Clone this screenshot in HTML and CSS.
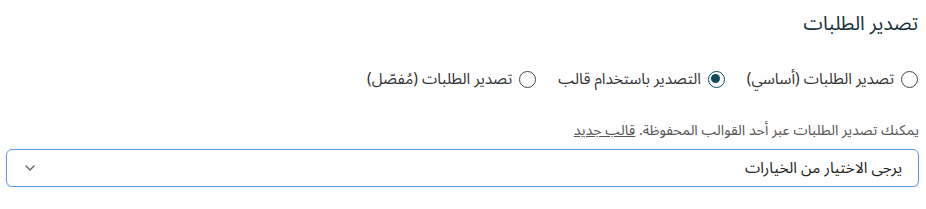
FILE: index.html
```html
<!DOCTYPE html>
<html lang="ar" dir="rtl">
<head>
    <meta charset="UTF-8">
    <meta name="viewport" content="width=device-width, initial-scale=1.0">
    <title>تصدير الطلبات</title>
    <link rel="stylesheet" href="styles.css">
</head>
<body>
<div class="export-form">
    <h5 class="form-title">تصدير الطلبات</h5>
    <div class="radio-group">
        <label class="radio-item">
            <span class="radio"></span>
            <span>تصدير الطلبات (أساسي)</span>
        </label>
        <label class="radio-item">
            <span class="radio checked"></span>
            <span>التصدير باستخدام قالب</span>
        </label>
        <label class="radio-item">
            <span class="radio"></span>
            <span>تصدير الطلبات (مُفصّل)</span>
        </label>
    </div>
    <p class="help-text">يمكنك تصدير الطلبات عبر أحد القوالب المحفوظة. <a href="#">قالب جديد</a></p>
    <div class="select-box">
        <span>يرجى الاختيار من الخيارات</span>
        <svg class="chevron" width="10" height="6" viewBox="0 0 10 6"><path d="M1 1l4 4 4-4" fill="none" stroke="#6b5a4a" stroke-width="1.3" stroke-linecap="round" stroke-linejoin="round"/></svg>
    </div>
</div>
</body>
</html>
```

FILE: styles.css
```css
body {
    margin: 0;
    font-family: "Noto Sans Arabic", "DejaVu Sans", sans-serif;
    background: #fff;
    color: #222;
}
.export-form {
    padding: 11px 7px 0 6px;
}
.form-title {
    margin: 0;
    padding-right: 1px;
    font-size: 19.5px;
    font-weight: normal;
    color: #17323c;
    line-height: 26px;
}
.radio-group {
    display: flex;
    gap: 22px;
    margin-top: 31px;
    padding-right: 1px;
}
.radio-item {
    display: flex;
    align-items: center;
    gap: 7px;
    font-size: 15.4px;
    line-height: 22px;
    color: #333;
    cursor: pointer;
}
.radio {
    width: 17px;
    height: 17px;
    border: 1.3px solid #444;
    border-radius: 50%;
    box-sizing: border-box;
    position: relative;
}
.radio.checked {
    border: 1.5px solid #0d4a5a;
}
.radio.checked:after {
    content: "";
    position: absolute;
    top: 2.5px;
    left: 2.5px;
    width: 9px;
    height: 9px;
    border-radius: 50%;
    background: #0d4a5a;
}
.help-text {
    margin: 31px 0 8px 0;
    font-size: 14.3px;
    color: #555;
    line-height: 20px;
}
.help-text a {
    color: #555;
}
.select-box {
    height: 38px;
    box-sizing: border-box;
    border: 1px solid #5c9aea;
    border-radius: 6px;
    box-shadow: 0 1px 1px rgba(60, 120, 220, 0.35);
    display: flex;
    align-items: center;
    justify-content: space-between;
    padding: 0 16px 0 18px;
    font-size: 15.4px;
    color: #222;
}
```
